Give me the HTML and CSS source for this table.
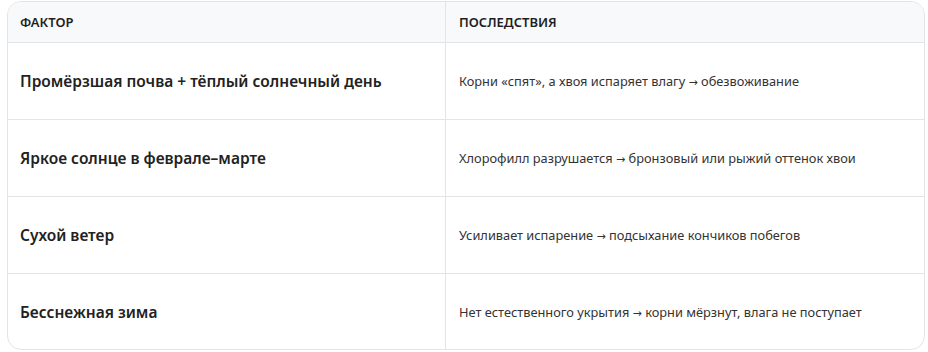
FILE: index.html
```html
<!DOCTYPE html>
<html lang="ru">
<head>
<meta charset="utf-8">
<link rel="stylesheet" href="styles.css">
</head>
<body>
<div class="card">
  <table class="tbl">
    <thead>
      <tr><th class="c1">Фактор</th><th class="c2">Последствия</th></tr>
    </thead>
    <tbody>
      <tr><td class="c1 f">Промёрзшая почва + тёплый солнечный день</td><td class="c2 e">Корни «спят», а хвоя испаряет влагу <span class="ar">→</span> обезвоживание</td></tr>
      <tr><td class="c1 f">Яркое солнце в феврале–марте</td><td class="c2 e">Хлорофилл разрушается <span class="ar">→</span> бронзовый или рыжий оттенок хвои</td></tr>
      <tr><td class="c1 f">Сухой ветер</td><td class="c2 e">Усиливает испарение <span class="ar">→</span> подсыхание кончиков побегов</td></tr>
      <tr><td class="c1 f">Бесснежная зима</td><td class="c2 e">Нет естественного укрытия <span class="ar">→</span> корни мёрзнут, влага не поступает</td></tr>
    </tbody>
  </table>
</div>
</body>
</html>
```
FILE: styles.css
```css
html, body { margin: 0; padding: 0; background: #fff; }
body { padding: 1px 3px 0 7px; font-family: "Noto Sans", "Open Sans", sans-serif; color: #1f1f1f; }
.card {
  width: 918px;
  height: 349px;
  box-sizing: border-box;
  border: 1px solid #e3e4e6;
  border-radius: 14px;
  overflow: hidden;
}
.tbl { width: 100%; border-collapse: collapse; table-layout: fixed; }
.tbl th {
  background: #f8f9fb;
  height: 40px;
  text-align: left;
  font-size: 13px;
  font-weight: 600;
  text-transform: uppercase;
  padding: 0 12px;
  border-bottom: 1px solid #e3e4e6;
  color: #1f1f1f;
}
.tbl .c1 { width: 413px; border-right: 1px solid #e3e4e6; }
.tbl td { height: 76px; padding: 0 12px; border-bottom: 1px solid #e3e4e6; }
.tbl tbody tr:last-child td { border-bottom: none; }
.tbl .c2 { padding-left: 13px; }
.f { font-size: 15.5px; font-weight: 600; color: #222; }
.e { font-size: 12.8px; color: #333; }
.ar { font-family: "DejaVu Sans", sans-serif; font-size: 11px; }
```
